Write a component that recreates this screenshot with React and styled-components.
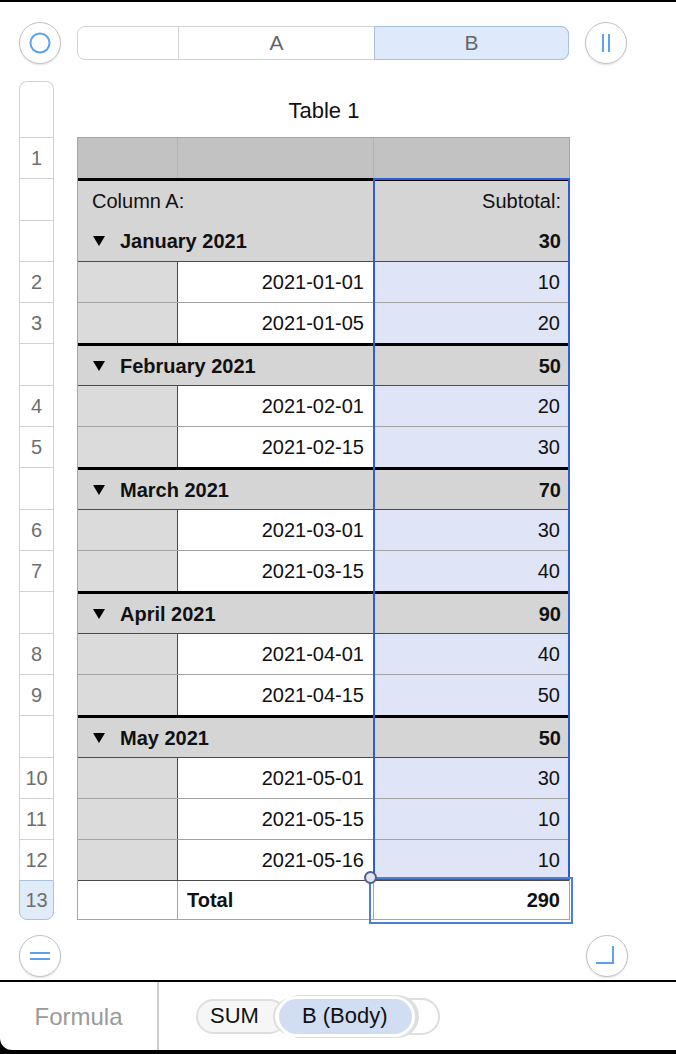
import styled, { createGlobalStyle } from "styled-components";

const GlobalStyle = createGlobalStyle`
  * { box-sizing: border-box; }
  body {
    margin: 0;
    background: #ffffff;
    font-family: "Liberation Sans", Arial, sans-serif;
  }
`;

const months = [
	{ name: "January 2021", total: 30, days: [["2021-01-01", 10, 2], ["2021-01-05", 20, 3]] },
	{ name: "February 2021", total: 50, days: [["2021-02-01", 20, 4], ["2021-02-15", 30, 5]] },
	{ name: "March 2021", total: 70, days: [["2021-03-01", 30, 6], ["2021-03-15", 40, 7]] },
	{ name: "April 2021", total: 90, days: [["2021-04-01", 40, 8], ["2021-04-15", 50, 9]] },
	{ name: "May 2021", total: 50, days: [["2021-05-01", 30, 10], ["2021-05-15", 10, 11], ["2021-05-16", 10, 12]] },
];

// one list drives both the row headers and the table so they line up
const rows = [{ kind: "head", num: "1", h: 41 }, { kind: "label", h: 42 }];
months.forEach((m, i) => {
	rows.push({ kind: "group", thick: i > 0, h: i > 0 ? 42 : 41, name: m.name, total: m.total });
	m.days.forEach(([date, value, num], j) => {
		rows.push({ kind: "data", first: j === 0, h: 41, date, value, num });
	});
});
rows.push({ kind: "foot", num: "13", h: 40 });

const Page = styled.div`
  width: 676px;
  height: 1054px;
  border-top: 2px solid #000;
  display: flex;
  flex-direction: column;
  background: #fff;
  overflow: hidden;
`;

const TopBar = styled.div`
  display: flex;
  align-items: center;
  gap: 16px;
  padding: 20px 0 0 19px;
`;

const RoundButton = styled.div`
  width: 42px;
  height: 42px;
  flex: none;
  border-radius: 50%;
  border: 1px solid #c3c3c3;
  background: #fff;
  box-shadow: 0 1px 2px rgba(0, 0, 0, 0.12);
  display: grid;
  place-items: center;
`;

const ColumnBar = styled.div`
  width: 492px;
  height: 34px;
  display: grid;
  grid-template-columns: 100px 196px 1fr;
  border: 1px solid #d3d3d3;
  border-radius: 8px;
  color: #666;
  font-size: 21px;
`;

const BarSeg = styled.div`
  display: flex;
  align-items: center;
  justify-content: center;
  border-left: ${(p) => (p.$first ? "none" : "1px solid #d6d6d6")};
  ${(p) =>
		p.$selected &&
		`
    background: #deeafb;
    border: 1px solid #a9bfdc;
    margin: -1px -1px -1px 0;
    border-radius: 0 8px 8px 0;
  `}
`;

const Sheet = styled.div`
  display: flex;
  gap: 23px;
  padding-left: 19px;
  margin-top: 17px;
`;

const RowHeaders = styled.div`
  width: 35px;
  display: flex;
  flex-direction: column;
`;

const RowHeadTop = styled.div`
  height: 56px;
  border: 1px solid #d2d2d2;
  border-bottom: none;
  border-radius: 8px 8px 0 0;
`;

const RowHead = styled.div`
  height: ${(p) => p.$h}px;
  display: flex;
  align-items: center;
  justify-content: center;
  border: 1px solid #d2d2d2;
  border-bottom: none;
  color: #6e6e6e;
  font-size: 20px;
  ${(p) =>
		p.$selected &&
		`
    background: #e1ecfb;
    border: 1px solid #aac1df;
    border-radius: 0 0 8px 8px;
  `}
`;

const TableArea = styled.div`
  width: 493px;
  display: flex;
  flex-direction: column;
`;

const Title = styled.div`
  height: 56px;
  display: flex;
  align-items: center;
  justify-content: center;
  font-size: 22px;
  color: #111;
  padding: 4px 0 0 1px;
`;

const Grid = styled.div`
  position: relative;
  border-left: 1px solid #a5a5a5;
  border-right: 1px solid #a5a5a5;
`;

const Row = styled.div`
  display: grid;
  grid-template-columns: 99px 196px 196px;
  height: ${(p) => p.$h}px;
  font-size: 20px;
  color: #111;
`;

const HeadRow = styled(Row)`
  background: #c1c2c1;
  border-top: 1px solid #a5a5a5;
`;

const HeadCell = styled.div`
  border-left: ${(p) => (p.$first ? "none" : "1px solid #b2b2b2")};
`;

const BandRow = styled(Row)`
  background: #d5d5d5;
  border-top: ${(p) => (p.$thick ? "3px solid #000" : "none")};
  align-items: center;
`;

const BandLeft = styled.div`
  grid-column: 1 / 3;
  display: flex;
  align-items: center;
  padding: ${(p) => (p.$group ? "1px 0 0 15px" : "2px 0 0 14px")};
  font-weight: ${(p) => (p.$group ? 700 : 400)};
`;

const BandRight = styled.div`
  text-align: right;
  padding: ${(p) => (p.$group ? "1px 8px 0 0" : "2px 8px 0 0")};
  font-weight: ${(p) => (p.$group ? 700 : 400)};
`;

const Triangle = styled.span`
  width: 0;
  height: 0;
  border-left: 6px solid transparent;
  border-right: 6px solid transparent;
  border-top: 10px solid #000;
  margin-right: 15px;
`;

const DataRow = styled(Row)`
  border-top: 1px solid ${(p) => (p.$first ? "#4a4a4a" : "#a3a3a3")};
`;

const Cell = styled.div`
  display: flex;
  align-items: center;
  justify-content: ${(p) => (p.$left ? "flex-start" : "flex-end")};
  padding: 0 ${(p) => (p.$left ? 0 : 9)}px 0 ${(p) => (p.$left ? 9 : 0)}px;
  background: ${(p) => p.$bg || "#fff"};
  border-left: ${(p) => (p.$line ? `1px solid ${p.$line}` : "none")};
  font-weight: ${(p) => (p.$bold ? 700 : 400)};
`;

const FootRow = styled(Row)`
  border-top: 1px solid #4a4a4a;
  border-bottom: 1px solid #a5a5a5;
`;

const Selection = styled.div`
  position: absolute;
  left: ${(p) => p.$x}px;
  top: ${(p) => p.$y}px;
  width: ${(p) => p.$w}px;
  height: ${(p) => p.$hh}px;
  border: 2px solid ${(p) => p.$color};
  pointer-events: none;
`;

const Handle = styled.div`
  position: absolute;
  left: 286px;
  top: 734px;
  width: 13px;
  height: 13px;
  border-radius: 50%;
  background: #e3e5ee;
  border: 2px solid #4d5f8d;
`;

const BottomButtons = styled.div`
  display: flex;
  justify-content: space-between;
  padding: 0 48px 0 19px;
  margin-top: 15px;
`;

const Footer = styled.div`
  margin-top: 3px;
  border-top: 2px solid #000;
  background: #000;
  padding-bottom: 4px;
`;

const FooterPanel = styled.div`
  height: 68px;
  background: #fff;
  border-radius: 0 0 0 12px;
  display: flex;
`;

const FormulaLabel = styled.div`
  width: 159px;
  border-right: 2px solid #cbcbcb;
  display: flex;
  align-items: center;
  justify-content: center;
  color: #9a9a9a;
  font-size: 24px;
  padding: 1px 0 0 0;
`;

const Tokens = styled.div`
  display: flex;
  align-items: center;
  padding-left: 37px;
  font-size: 22px;
  color: #111;
`;

const SumPill = styled.div`
  height: 35px;
  border: 2px solid #dedede;
  background: #f6f6f6;
  border-radius: 18px;
  padding: 0 26px 0 12px;
  display: flex;
  align-items: center;
`;

const BodyRing = styled.div`
  height: 37px;
  margin-left: -14px;
  border: 2px solid #dedede;
  border-radius: 19px;
  background: #fff;
  padding: 0 28px 0 4px;
  display: flex;
  align-items: center;
`;

const BodyPill = styled.div`
  height: 35px;
  margin: 0 -2px 0 0;
  background: #d1ddf3;
  border-radius: 18px;
  padding: 0 25px 0 23px;
  display: flex;
  align-items: center;
  box-shadow: 0 0 0 3px #fff, 3px 0 0 4px #dedede;
`;

function App() {
	return (
		<>
			<GlobalStyle />
			<Page>
				<TopBar>
					<RoundButton>
						<svg width="22" height="22" viewBox="0 0 22 22">
							<circle cx="11" cy="11" r="9.5" fill="none" stroke="#5aa2f6" strokeWidth="2" />
						</svg>
					</RoundButton>
					<ColumnBar>
						<BarSeg $first />
						<BarSeg>A</BarSeg>
						<BarSeg $selected>B</BarSeg>
					</ColumnBar>
					<RoundButton>
						<svg width="20" height="20" viewBox="0 0 20 20">
							<line x1="7" y1="1" x2="7" y2="19" stroke="#5aa2f6" strokeWidth="2" />
							<line x1="13" y1="1" x2="13" y2="19" stroke="#5aa2f6" strokeWidth="2" />
						</svg>
					</RoundButton>
				</TopBar>

				<Sheet>
					<RowHeaders>
						<RowHeadTop />
						{rows.map((r, i) => (
							<RowHead key={i} $h={r.h} $selected={r.kind === "foot"}>
								{r.num || ""}
							</RowHead>
						))}
					</RowHeaders>

					<TableArea>
						<Title>Table 1</Title>
						<Grid>
							{rows.map((r, i) => {
								if (r.kind === "head")
									return (
										<HeadRow key={i} $h={r.h}>
											<HeadCell $first />
											<HeadCell />
											<HeadCell />
										</HeadRow>
									);
								if (r.kind === "label")
									return (
										<BandRow key={i} $h={r.h} $thick>
											<BandLeft>Column A:</BandLeft>
											<BandRight>Subtotal:</BandRight>
										</BandRow>
									);
								if (r.kind === "group")
									return (
										<BandRow key={i} $h={r.h} $thick={r.thick}>
											<BandLeft $group>
												<Triangle />
												{r.name}
											</BandLeft>
											<BandRight $group>{r.total}</BandRight>
										</BandRow>
									);
								if (r.kind === "data")
									return (
										<DataRow key={i} $h={r.h} $first={r.first}>
											<Cell $bg="#dbdbdb" />
											<Cell $line="#4a4a4a">{r.date}</Cell>
											<Cell $bg="#dfe4f7">{r.value}</Cell>
										</DataRow>
									);
								return (
									<FootRow key={i} $h={r.h}>
										<Cell />
										<Cell $left $bold $line="#a5a5a5">Total</Cell>
										<Cell $bold $line="#a5a5a5">290</Cell>
									</FootRow>
								);
							})}
							<Selection $x={295} $y={41} $w={197} $hh={702} $color="#2d5cd5" />
							<Selection $x={291} $y={740} $w={204} $hh={47} $color="#4c80d4" />
							<Handle />
						</Grid>
					</TableArea>
				</Sheet>

				<BottomButtons>
					<RoundButton>
						<svg width="22" height="22" viewBox="0 0 22 22">
							<line x1="1" y1="8" x2="21" y2="8" stroke="#5aa2f6" strokeWidth="2" />
							<line x1="1" y1="14" x2="21" y2="14" stroke="#5aa2f6" strokeWidth="2" />
						</svg>
					</RoundButton>
					<RoundButton>
						<svg width="22" height="22" viewBox="0 0 22 22">
							<polyline points="17,1 17,18 0,18" fill="none" stroke="#5aa2f6" strokeWidth="2" />
						</svg>
					</RoundButton>
				</BottomButtons>

				<Footer>
					<FooterPanel>
						<FormulaLabel>Formula</FormulaLabel>
						<Tokens>
							<SumPill>SUM</SumPill>
							<BodyRing>
								<BodyPill>B (Body)</BodyPill>
							</BodyRing>
						</Tokens>
					</FooterPanel>
				</Footer>
			</Page>
		</>
	);
}

export default App;
